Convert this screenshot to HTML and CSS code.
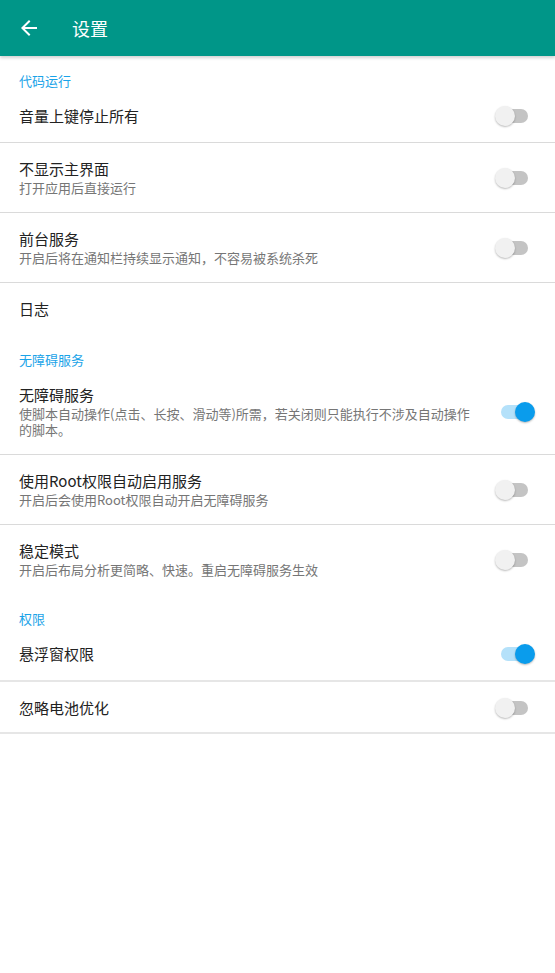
FILE: index.html
```html
<!DOCTYPE html>
<html lang="zh-CN">
<head>
<meta charset="utf-8">
<title>设置</title>
<link rel="stylesheet" href="styles.css">
</head>
<body>
<header class="appbar">
  <span class="back">
    <svg width="24" height="24" viewBox="0 0 24 24"><path d="M20 11H7.83l5.59-5.59L12 4l-8 8 8 8 1.41-1.41L7.83 13H20v-2z" fill="#fff"/></svg>
  </span>
  <span class="apptitle">设置</span>
</header>
<main class="list">
  <div class="cat">代码运行</div>
  <div class="row div1">
    <div class="text"><div class="title">音量上键停止所有</div></div>
    <div class="widget"><span class="sw"><span class="track"></span><span class="thumb"></span></span></div>
  </div>
  <div class="row div1">
    <div class="text"><div class="title">不显示主界面</div><div class="summary">打开应用后直接运行</div></div>
    <div class="widget"><span class="sw"><span class="track"></span><span class="thumb"></span></span></div>
  </div>
  <div class="row div1">
    <div class="text"><div class="title">前台服务</div><div class="summary">开启后将在通知栏持续显示通知，不容易被系统杀死</div></div>
    <div class="widget"><span class="sw"><span class="track"></span><span class="thumb"></span></span></div>
  </div>
  <div class="row">
    <div class="text"><div class="title">日志</div></div>
  </div>

  <div class="cat">无障碍服务</div>
  <div class="row div1">
    <div class="text"><div class="title">无障碍服务</div><div class="summary">使脚本自动操作(点击、长按、滑动等)所需，若关闭则只能执行不涉及自动操作的脚本。</div></div>
    <div class="widget"><span class="sw on"><span class="track"></span><span class="thumb"></span></span></div>
  </div>
  <div class="row div1">
    <div class="text"><div class="title">使用Root权限自动启用服务</div><div class="summary">开启后会使用Root权限自动开启无障碍服务</div></div>
    <div class="widget"><span class="sw"><span class="track"></span><span class="thumb"></span></span></div>
  </div>
  <div class="row">
    <div class="text"><div class="title">稳定模式</div><div class="summary">开启后布局分析更简略、快速。重启无障碍服务生效</div></div>
    <div class="widget"><span class="sw"><span class="track"></span><span class="thumb"></span></span></div>
  </div>

  <div class="cat">权限</div>
  <div class="row div2">
    <div class="text"><div class="title">悬浮窗权限</div></div>
    <div class="widget"><span class="sw on"><span class="track"></span><span class="thumb"></span></span></div>
  </div>
  <div class="row div2 last">
    <div class="text"><div class="title">忽略电池优化</div></div>
    <div class="widget"><span class="sw"><span class="track"></span><span class="thumb"></span></span></div>
  </div>
</main>
</body>
</html>
```
FILE: styles.css
```css
* { box-sizing: border-box; }
html, body {
  margin: 0;
  padding: 0;
  background: #ffffff;
  font-family: "Noto Sans CJK SC", "Noto Sans", Roboto, sans-serif;
}
.appbar {
  height: 56px;
  background: #009688;
  display: flex;
  align-items: center;
  box-shadow: 0 2px 3px rgba(0,0,0,0.18);
  position: relative;
  z-index: 1;
}
.back {
  width: 24px;
  height: 24px;
  margin-left: 17px;
  display: flex;
}
.apptitle {
  margin-left: 31px;
  color: #ffffff;
  font-size: 18px;
  line-height: 24px;
}
.list {
  display: flex;
  flex-direction: column;
}
.cat {
  padding: 16px 19px 0;
  font-size: 13px;
  line-height: 18px;
  height: 34px;
  color: #1aa3e8;
}
.row {
  display: flex;
  align-items: center;
  padding: 16px 0 16px 19px;
  min-height: 52px;
}
.div1 { border-bottom: 1px solid #dadada; }
.div2 { border-bottom: 2px solid #e6e6e6; }
.row.last { padding-bottom: 14px; padding-top: 15px; }
.text {
  flex: 1;
  min-width: 0;
}
.title {
  font-size: 15px;
  line-height: 20px;
  color: #222222;
}
.summary {
  margin-top: 1px;
  font-size: 13px;
  line-height: 16px;
  color: #767676;
}
.widget {
  width: 74px;
  flex: none;
  display: flex;
  padding-left: 14px;
}
.sw {
  position: relative;
  width: 40px;
  height: 20px;
  display: block;
}
.track {
  position: absolute;
  left: 6px;
  top: 3px;
  width: 27px;
  height: 14px;
  border-radius: 7px;
  background: #c4c4c4;
}
.thumb {
  position: absolute;
  left: 0;
  top: 0;
  width: 20px;
  height: 20px;
  border-radius: 50%;
  background: #f1f1f1;
  box-shadow: 0 1px 2px rgba(0,0,0,0.28);
}
.sw.on .track { background: #b4e1fa; }
.sw.on .thumb {
  left: 20px;
  background: #0a9cec;
}
```
